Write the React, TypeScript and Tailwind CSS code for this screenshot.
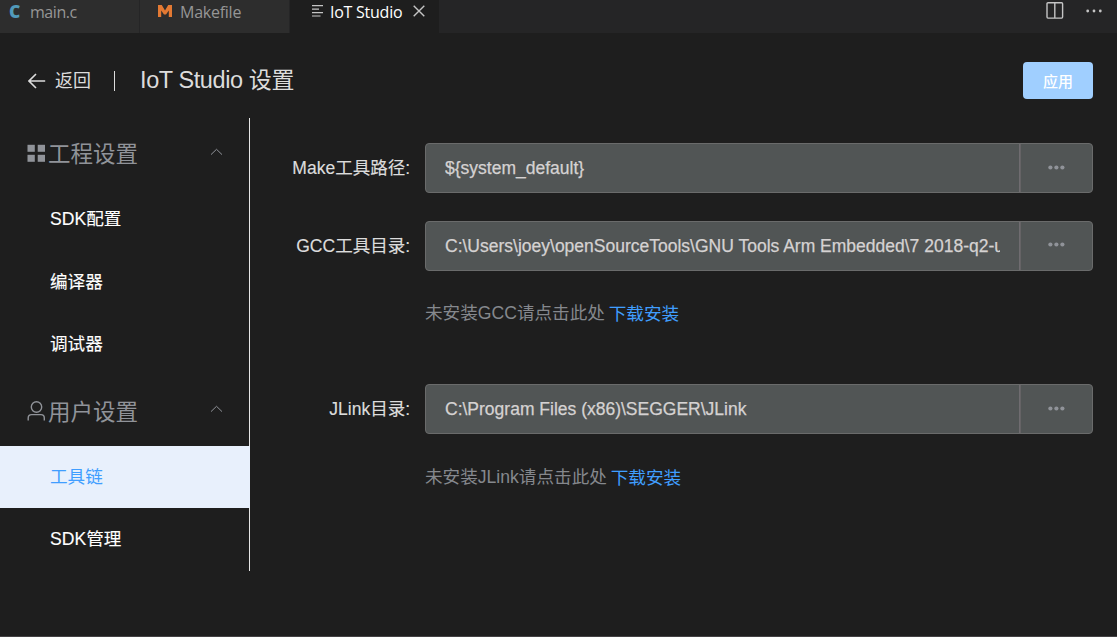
import React from "react";

const ELLIPSIS_DOTS = [2.4, 8.4, 14.4];

function Chevron() {
  return (
    <svg className="mr-[26px] mb-[3px] h-[8px] w-[13px]" viewBox="0 0 13 8" fill="none" stroke="#909399" strokeWidth="1">
      <path d="M1 6.6 L6.5 1.3 L12 6.6" />
    </svg>
  );
}

function GridIcon() {
  return (
    <svg className="h-[18px] w-[18px]" viewBox="0 0 18 18" fill="#909399">
      <rect x="0.5" y="0.8" width="7.3" height="7" />
      <rect x="10.7" y="0.8" width="7.3" height="7" />
      <rect x="0.5" y="10.8" width="7.3" height="7" />
      <rect x="10.7" y="10.8" width="7.3" height="7" />
    </svg>
  );
}

function UserIcon() {
  return (
    <svg className="h-[20px] w-[18px]" viewBox="0 0 18 20" fill="none" stroke="#909399" strokeWidth="1.4">
      <circle cx="9.5" cy="6" r="5.2" />
      <path d="M1.2 19.5 V17 Q1.2 13.6 4.6 13.6 H14 Q17.3 13.6 17.3 17 V19.5" />
    </svg>
  );
}

function SectionTitle({ icon, label }: { icon: React.ReactNode; label: string }) {
  return (
    <div className="flex h-[70px] items-center pl-[27px] text-[22.5px] leading-[30px] text-[#909399]">
      <span className="flex w-[21px] items-center">{icon}</span>
      <span className="grow pt-[4px]">{label}</span>
      <Chevron />
    </div>
  );
}

function MenuItem({ label, active = false }: { label: string; active?: boolean }) {
  return (
    <div
      className={
        active
          ? "-mr-px flex h-[62px] items-center bg-[#e8f0fc] pl-[50px] text-[#409eff]"
          : "flex h-[62.5px] items-center pl-[50px] text-white [-webkit-text-stroke:0.12px_#ffffff]"
      }
    >
      {label}
    </div>
  );
}

function PathField({ label, value, raised = false }: { label: string; value: string; raised?: boolean }) {
  return (
    <div className="flex h-[50px] items-center">
      <div className="w-[160px] shrink-0 text-right text-[#dcdcdc] [-webkit-text-stroke:0.15px_#dcdcdc]">{label}</div>
      <div className="ml-[15px] flex h-[50px] w-[668px] shrink-0 overflow-hidden rounded-[4px] border border-[#6a6b6b] bg-[#515555]">
        <div className="flex w-[594px] items-center border-r border-[#6f6c70] px-[19px] text-[#d5d2d2] [-webkit-text-stroke:0.25px_#d5d2d2]">
          <span className="w-full overflow-hidden whitespace-nowrap">{value}</span>
        </div>
        <div className={raised ? "flex grow items-center justify-center border-l border-[#656365] pb-[2px]" : "flex grow items-center justify-center border-l border-[#656365]"}>
          <svg className="mb-[2px] h-[5px] w-[17px]" viewBox="0 0 17 5" fill="#909399">
            {ELLIPSIS_DOTS.map((x) => (
              <circle key={x} cx={x} cy="2.5" r="2.1" />
            ))}
          </svg>
        </div>
      </div>
    </div>
  );
}

function Hint({ text }: { text: string }) {
  return (
    <div className="ml-[175px] flex h-[26px] items-center whitespace-pre text-[17.6px] text-[#85888d]">
      <span>{text} </span>
      <a className="-ml-px pt-px text-[#409eff]">下载安装</a>
    </div>
  );
}

export default function App() {
  return (
    <div className="flex h-[637px] w-[1117px] flex-col overflow-hidden border-b border-[#444244] bg-[#1e1e1e] font-['Liberation_Sans','Noto_Sans_CJK_SC',sans-serif] text-[17.6px] leading-[26px]">
      <div className="flex h-[33px] shrink-0 bg-[#252526] font-['Open_Sans',sans-serif] text-[16px] leading-[24px] tracking-[-0.25px]">
        <div className="flex w-[140px] border-r border-[#252526] bg-[#2d2d2d] pl-[9px] text-[#969696]">
          <span className="w-[21px] text-[17.5px] leading-[22px] font-extrabold text-[#519aba]">C</span>
          <span className="tracking-[-0.45px]">main.c</span>
        </div>
        <div className="flex w-[150px] border-r border-[#252526] bg-[#2d2d2d] pl-[18px] text-[#969696]">
          <svg className="mt-[5px] mr-[8px] h-[12px] w-[14px]" viewBox="0 0 14 12" fill="#e37933">
            <path d="M0 12 V0 H3.8 L7 5.4 L10.2 0 H14 V12 H10.8 V5.4 L8 9.4 H6 L3.2 5.4 V12 Z" />
          </svg>
          <span>Makefile</span>
        </div>
        <div className="flex w-[149px] bg-[#1e1e1e] pl-[22px] text-white">
          <svg className="mt-[5px] mr-[7px] h-[12px] w-[11px]" viewBox="0 0 11 12" fill="none" stroke="#c5c5c5" strokeWidth="1.2">
            <path d="M0 0.7H11 M0 4.1H7 M0 7.6H11 M0 11H8.5" />
          </svg>
          <span className="w-[83px]">IoT Studio</span>
          <svg className="mt-[5px] h-[12px] w-[12px]" viewBox="0 0 12 12" fill="none" stroke="#c5c5c5" strokeWidth="1.4">
            <path d="M0.7 0.7 L11.3 11.3 M11.3 0.7 L0.7 11.3" />
          </svg>
        </div>
        <div className="flex grow justify-end pr-[15px]">
          <svg className="mt-[2px] mr-[22px] h-[17px] w-[18px]" viewBox="0 0 18 17" fill="none" stroke="#c5c5c5" strokeWidth="1.4">
            <rect x="1" y="0.7" width="15.6" height="15.4" rx="1" />
            <path d="M8.8 1 V16" />
          </svg>
          <svg className="mt-[9px] h-[4px] w-[16px]" viewBox="0 0 16 4" fill="#c5c5c5">
            <circle cx="1.7" cy="2" r="1.4" />
            <circle cx="8" cy="2" r="1.4" />
            <circle cx="14.3" cy="2" r="1.4" />
          </svg>
        </div>
      </div>

      <div className="flex h-[85px] shrink-0 items-center pt-[10px] pr-[24px] pl-[28px] text-[#dcdcdc]">
        <div className="flex h-[37px] grow items-center">
          <svg className="mr-[9px] h-[16px] w-[18px]" viewBox="0 0 18 16" fill="none" stroke="#dcdcdc" strokeWidth="1.6">
            <path d="M8 1 L1 8 L8 15 M1 8 H17.2" />
          </svg>
          <span className="pt-px text-[18px]">返回</span>
          <span className="mr-[25px] ml-[23px] h-[20px] w-px bg-[#dcdcdc]" />
          <span className="pb-[2px] text-[23.5px] leading-[30px] tracking-[-0.4px] whitespace-nowrap">
            IoT Studio <span className="text-[23px]">设置</span>
          </span>
        </div>
        <button className="h-[37px] w-[70px] rounded-[4px] bg-[#a0cfff] pt-[2px] text-[15px] font-medium text-white">应用</button>
      </div>

      <div className="flex">
        <nav className="h-[453px] w-[250px] shrink-0 border-r border-[#e6e6e6]">
          <SectionTitle icon={<GridIcon />} label="工程设置" />
          <MenuItem label="SDK配置" />
          <MenuItem label="编译器" />
          <MenuItem label="调试器" />
          <SectionTitle icon={<UserIcon />} label="用户设置" />
          <MenuItem label="工具链" active />
          <MenuItem label="SDK管理" />
        </nav>
        <main className="pt-[25px] text-[17.5px]">
          <PathField label="Make工具路径:" value="${system_default}" />
          <div className="h-[28px]" />
          <PathField label="GCC工具目录:" value="C:\Users\joey\openSourceTools\GNU Tools Arm Embedded\7 2018-q2-update" raised />
          <div className="mt-[29px] mb-[58px]">
            <Hint text="未安装GCC请点击此处" />
          </div>
          <PathField label="JLink目录:" value="C:\Program Files (x86)\SEGGER\JLink" />
          <div className="mt-[30px]">
            <Hint text="未安装JLink请点击此处" />
          </div>
        </main>
      </div>
    </div>
  );
}
